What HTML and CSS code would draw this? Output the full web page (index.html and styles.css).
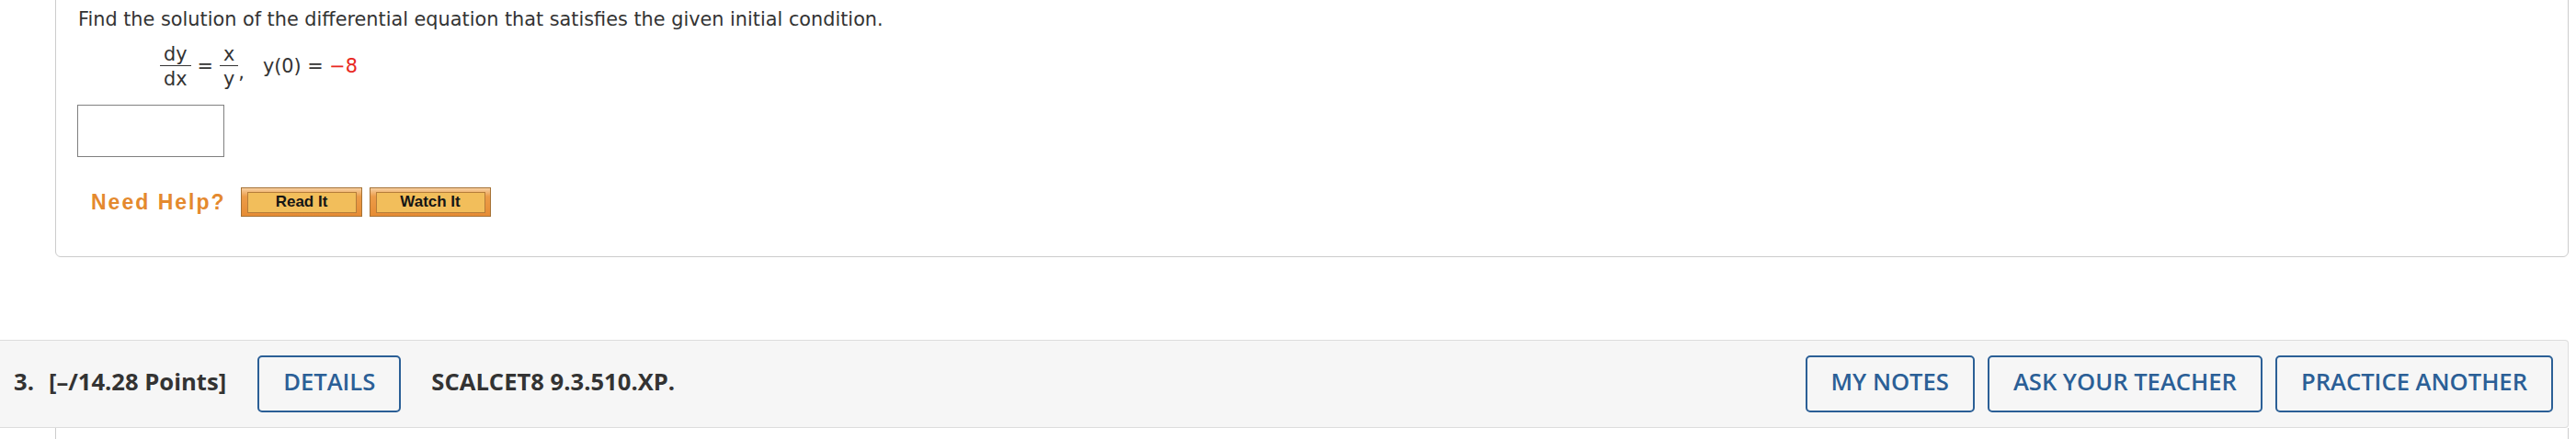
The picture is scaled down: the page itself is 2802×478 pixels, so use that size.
FILE: index.html
```html
<!DOCTYPE html>
<html lang="en">
<head>
<meta charset="utf-8">
<title>Question</title>
<link rel="stylesheet" href="styles.css">
</head>
<body>
<div class="page">
  <div class="card">
    <p class="question">Find the solution of the differential equation that satisfies the given initial condition.</p>
    <div class="equation">
      <span class="frac"><span class="num">dy</span><span class="den">dx</span></span>
      <span class="op">=</span>
      <span class="frac"><span class="num">x</span><span class="den">y</span></span>
      <span class="comma">,</span>
      <span class="cond">y(0) = <span class="red">&minus;8</span></span>
    </div>
    <input class="answer" type="text" aria-label="answer">
    <div class="help">
      <span class="help-label">Need Help?</span>
      <span class="help-btn"><span class="help-inner">Read It</span></span>
      <span class="help-btn"><span class="help-inner">Watch It</span></span>
    </div>
  </div>

  <div class="qbar">
    <span class="qnum">3.</span>
    <span class="points">[&ndash;/14.28 Points]</span>
    <span class="btn details">DETAILS</span>
    <span class="code">SCALCET8 9.3.510.XP.</span>
    <div class="actions">
      <span class="btn">MY NOTES</span>
      <span class="btn">ASK YOUR TEACHER</span>
      <span class="btn">PRACTICE ANOTHER</span>
    </div>
  </div>
  <div class="next-card"></div>
</div>
</body>
</html>
```

FILE: styles.css
```css
html, body {
  margin: 0;
  padding: 0;
  background: #ffffff;
}

.page {
  width: 2802px;
  height: 478px;
  overflow: hidden;
}

.card {
  margin: -20px 8px 0 60px;
  border: 1px solid #cccccc;
  border-radius: 6px;
  padding: 26px 24px 43px 24px;
  font-family: "DejaVu Sans", Verdana, sans-serif;
  font-size: 20.8px;
  color: #333333;
}

.question {
  margin: 0;
  line-height: 29px;
}

.equation {
  display: flex;
  align-items: center;
  margin: 13px 0 0 89px;
  line-height: 20.8px;
}

.frac {
  display: inline-flex;
  flex-direction: column;
  text-align: center;
}

.num {
  padding: 0 4px 1px;
}

.den {
  border-top: 1px solid #333333;
  padding: 4px 4px 0;
}

.op {
  margin: 0 7px;
}

.comma {
  align-self: center;
  position: relative;
  top: 7px;
}

.cond {
  margin-left: 20px;
}

.red {
  color: #e8281f;
}

.answer {
  display: block;
  box-sizing: border-box;
  width: 160px;
  height: 57px;
  margin: 17px 0 0 -1px;
  padding: 0;
  border: 1px solid #808080;
  background: #ffffff;
}

.help {
  display: flex;
  align-items: center;
  gap: 8px;
  height: 32px;
  margin-top: 33px;
}

.help-label {
  margin-left: 14px;
  margin-right: 8px;
  font-family: "Liberation Sans", Arial, sans-serif;
  font-weight: bold;
  font-size: 23px;
  letter-spacing: 2px;
  line-height: 32px;
  color: #e4892e;
}

.help-btn {
  display: flex;
  box-sizing: border-box;
  width: 132px;
  height: 32px;
  padding: 4px 5px 3px 6px;
  border: 1px solid #a57236;
  background: linear-gradient(to bottom, #f7cfa0 0%, #ec9c48 30%, #e68c34 100%);
}

.help-inner {
  flex: 1;
  display: flex;
  align-items: center;
  justify-content: center;
  border: 1px solid #b57d3a;
  background: #f2be5b;
  font-family: "Liberation Sans", Arial, sans-serif;
  font-weight: bold;
  font-size: 17px;
  color: #151515;
}

.qbar {
  display: flex;
  align-items: center;
  box-sizing: border-box;
  height: 96px;
  margin: 90px 8px 0 0;
  padding: 0 16px 0 15px;
  border: 1px solid #dddddd;
  border-left: none;
  border-radius: 0 4px 4px 0;
  background: #f6f6f6;
  font-family: "Open Sans", "Noto Sans", sans-serif;
  font-size: 25.6px;
  color: #333333;
}

.qnum,
.points,
.code {
  font-weight: 700;
  margin-bottom: 4px;
}

.points {
  margin-left: 16px;
}

.btn {
  display: flex;
  align-items: center;
  box-sizing: border-box;
  height: 62px;
  padding: 0 26px 4px;
  border: 2px solid #2b5f96;
  border-radius: 5px;
  color: #2b5f96;
  font-weight: 600;
  white-space: nowrap;
}

.details {
  margin-left: 34px;
}

.code {
  margin-left: 33px;
}

.actions {
  display: flex;
  gap: 14px;
  margin-left: auto;
}

.next-card {
  height: 20px;
  margin: 0 8px 0 60px;
  border-left: 1px solid #cccccc;
  border-right: 1px solid #cccccc;
}
```
